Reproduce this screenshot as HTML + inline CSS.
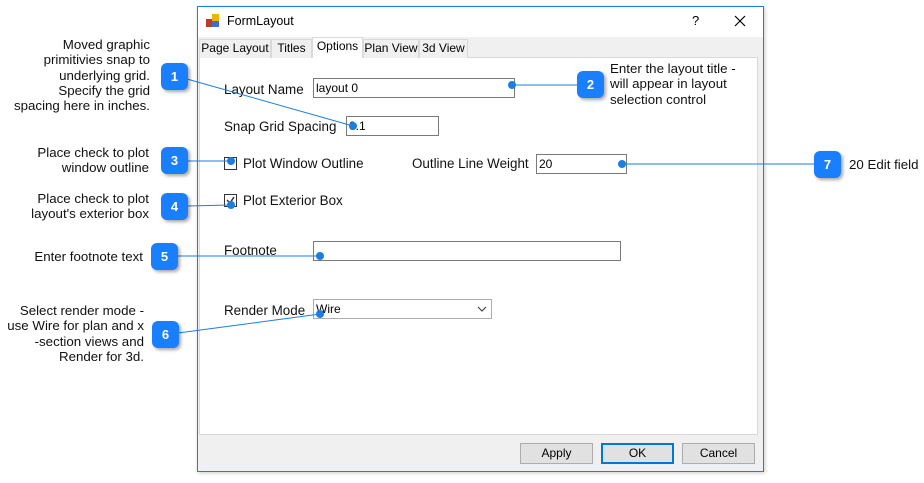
<!DOCTYPE html>
<html><head><meta charset="utf-8"><style>
*{margin:0;padding:0;box-sizing:border-box}
body{width:924px;height:483px;background:#fff;position:relative;overflow:hidden;font-family:"Liberation Sans",Arial,sans-serif;font-size:12px;color:#000}
.a{position:absolute}
.note{position:absolute;font-size:13.3px;line-height:15.3px;color:#111}
.r{text-align:right}
.co{position:absolute;width:27px;height:27px;border-radius:6px;background:#1a7fff;color:#fff;font-weight:bold;font-size:13px;text-align:center;line-height:27px;box-shadow:2px 2px 3px rgba(0,0,0,.35)}
.lbl{position:absolute;font-size:13.4px;color:#111}
.tb{position:absolute;border:1px solid #7a7a7a;background:#fff;font-size:12px;padding:2px 2px;height:20px;line-height:14px}
.tab{position:absolute;top:39px;height:19px;border:1px solid #d9d9d9;border-bottom:none;background:#f0f0f0;font-size:12px;line-height:17px;text-align:center}
.btn{position:absolute;top:443px;height:21px;border:1px solid #adadad;background:#e1e1e1;font-size:12px;text-align:center;line-height:19px}
.cb{position:absolute;width:13px;height:13px;border:1px solid #333;background:#fff}
</style></head><body>
<div class="a" style="left:197px;top:6px;width:567px;height:466px;border:1px solid #1a7fe0;background:#f0f0f0;box-shadow:1px 1px 4px rgba(0,0,0,.2)"></div>
<div class="a" style="left:198px;top:7px;width:565px;height:30px;background:#fff"></div>
<svg class="a" style="left:206px;top:14px" width="14" height="14"><rect x="0" y="5" width="6" height="8" fill="#c0392b"/><rect x="6" y="0" width="7" height="7" fill="#f0b400"/><rect x="6" y="7" width="7" height="6" fill="#3b6fd0"/></svg>
<div class="a" style="left:227px;top:14px;font-size:12.5px">FormLayout</div>
<div class="a" style="left:692px;top:13px;font-size:13px">?</div>
<svg class="a" style="left:734px;top:15px" width="12" height="12"><path d="M1 1L11 11M11 1L1 11" stroke="#000" stroke-width="1.2"/></svg>
<div class="a" style="left:199px;top:57px;width:559px;height:378px;background:#fff;border:1px solid #d9d9d9"></div>
<div class="tab" style="left:199px;width:72px">Page Layout</div>
<div class="tab" style="left:271px;width:41px">Titles</div>
<div class="tab" style="left:312px;top:37px;height:21px;width:51px;background:#fff">Options</div>
<div class="tab" style="left:363px;width:56px">Plan View</div>
<div class="tab" style="left:419px;width:49px">3d View</div>
<div class="lbl" style="left:224px;top:82px">Layout Name</div>
<div class="tb" style="left:313px;top:78px;width:202px">layout 0</div>
<div class="lbl" style="left:224px;top:119px">Snap Grid Spacing</div>
<div class="tb" style="left:346px;top:116px;width:93px">0.1</div>
<div class="cb" style="left:224px;top:157px"></div>
<div class="lbl" style="left:243px;top:156px">Plot Window Outline</div>
<div class="lbl" style="left:412px;top:156px">Outline Line Weight</div>
<div class="tb" style="left:536px;top:154px;width:91px">20</div>
<div class="cb" style="left:224px;top:194px"></div>
<svg class="a" style="left:225px;top:195px" width="11" height="11"><path d="M2 5L5 8L9 2" stroke="#333" stroke-width="1.5" fill="none"/></svg>
<div class="lbl" style="left:243px;top:193px">Plot Exterior Box</div>
<div class="lbl" style="left:224px;top:243px">Footnote</div>
<div class="tb" style="left:313px;top:241px;width:308px"></div>
<div class="lbl" style="left:224px;top:303px">Render Mode</div>
<div class="tb" style="left:313px;top:299px;width:179px;border-color:#adadad">Wire</div>
<svg class="a" style="left:477px;top:305px" width="10" height="8"><path d="M1 2L5 6L9 2" stroke="#333" fill="none"/></svg>
<div class="btn" style="left:520px;width:73px">Apply</div>
<div class="btn" style="left:601px;width:73px;border:2px solid #0078d7;line-height:17px">OK</div>
<div class="btn" style="left:682px;width:73px">Cancel</div>
<svg class="a" style="left:0;top:0" width="924" height="483">
<g stroke="#1a7fe0" stroke-width="1" fill="none">
<path d="M187 79L353 126"/>
<path d="M512 85L577 85"/>
<path d="M187 161L231 161"/>
<path d="M187 206L231 205"/>
<path d="M177 256L320 256"/>
<path d="M178 333L320 314"/>
<path d="M622 164L814 164"/>
</g>
<g fill="#1a7fe0">
<circle cx="353" cy="126" r="4"/><circle cx="512" cy="85" r="4"/><circle cx="231" cy="161" r="4"/><circle cx="231" cy="205" r="4"/><circle cx="320" cy="256" r="4"/><circle cx="320" cy="314" r="4"/><circle cx="622" cy="164" r="4"/>
</g></svg>
<div class="co" style="left:161px;top:63px">1</div>
<div class="co" style="left:577px;top:71px">2</div>
<div class="co" style="left:161px;top:147px">3</div>
<div class="co" style="left:161px;top:193px">4</div>
<div class="co" style="left:151px;top:243px">5</div>
<div class="co" style="left:152px;top:321px">6</div>
<div class="co" style="left:814px;top:151px">7</div>
<div class="note r" style="left:0;top:37px;width:150px">Moved graphic<br>primitivies snap to<br>underlying grid.<br>Specify the grid<br>spacing here in inches.</div>
<div class="note" style="left:610px;top:61px">Enter the layout title -<br>will appear in layout<br>selection control</div>
<div class="note r" style="left:0;top:145px;width:149px">Place check to plot<br>window outline</div>
<div class="note r" style="left:0;top:191px;width:149px">Place check to plot<br>layout's exterior box</div>
<div class="note r" style="left:0;top:249px;width:143px">Enter footnote text</div>
<div class="note r" style="left:0;top:303px;width:144px">Select render mode -<br>use Wire for plan and x<br>-section views and<br>Render for 3d.</div>
<div class="note" style="left:849px;top:157px">20 Edit field</div>
</body></html>
